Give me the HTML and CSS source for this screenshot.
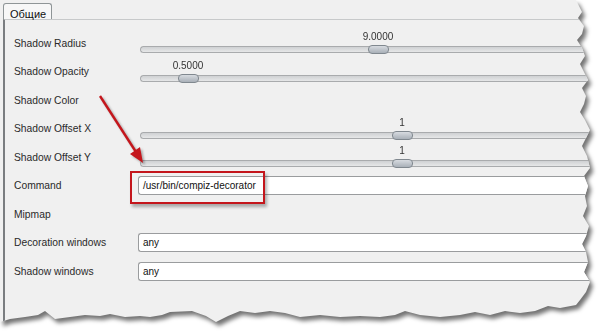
FILE: index.html
```html
<!DOCTYPE html>
<html lang="ru">
<head>
    <meta charset="UTF-8">
    <title>Compiz decorator</title>
    <link rel="stylesheet" href="styles.css">
</head>
<body>
    <div class="sheet">
        <div class="panel">
            <div class="tabs">
                <div class="tab">Общие</div>
            </div>
            <div class="page">
                <div class="row">
                    <span class="label">Shadow Radius</span>
                    <div class="slider">
                        <span class="value" style="left: 243px">9.0000</span>
                        <span class="thumb" style="left: 233px"></span>
                    </div>
                </div>
                <div class="row">
                    <span class="label">Shadow Opacity</span>
                    <div class="slider">
                        <span class="value" style="left: 53px">0.5000</span>
                        <span class="thumb" style="left: 43px"></span>
                    </div>
                </div>
                <div class="row">
                    <span class="label">Shadow Color</span>
                </div>
                <div class="row">
                    <span class="label">Shadow Offset X</span>
                    <div class="slider">
                        <span class="value" style="left: 267px">1</span>
                        <span class="thumb" style="left: 257px"></span>
                    </div>
                </div>
                <div class="row">
                    <span class="label">Shadow Offset Y</span>
                    <div class="slider">
                        <span class="value" style="left: 267px">1</span>
                        <span class="thumb" style="left: 257px"></span>
                    </div>
                </div>
                <div class="row">
                    <span class="label">Command</span>
                    <div class="entry">/usr/bin/compiz-decorator</div>
                </div>
                <div class="row">
                    <span class="label">Mipmap</span>
                </div>
                <div class="row">
                    <span class="label">Decoration windows</span>
                    <div class="entry">any</div>
                </div>
                <div class="row">
                    <span class="label">Shadow windows</span>
                    <div class="entry">any</div>
                </div>
            </div>
        </div>
    </div>

    <!-- пометки поверх скриншота -->
    <div class="mark-box"></div>
    <svg class="mark-arrow" width="60" height="80" viewBox="0 0 60 80">
        <line x1="5" y1="5" x2="41" y2="61" stroke="#c4161c" stroke-width="2.4"/>
        <polygon points="48,72 35,63 45,56" fill="#c4161c"/>
    </svg>
</body>
</html>
```

FILE: styles.css
```css
body {
    margin: 0;
    background-color: #fff;
    font-family: "Liberation Sans", Arial, sans-serif;
    font-size: 10px;
    color: #222;
    width: 600px;
    height: 332px;
    overflow: hidden;
    position: relative;
}

/* рваный край со скриншота */
.sheet {
    filter: drop-shadow(3px 4px 2px rgba(0, 0, 0, 0.55));
}

.panel {
    width: 600px;
    height: 332px;
    background-color: #f0f0f0;
    clip-path: polygon(0 0, 576px 0, 580px 8px, 582px 12px, 578px 18px, 584px 26px, 582px 34px, 577px 40px,
        582px 48px, 585px 56px, 580px 64px, 584px 72px, 588px 80px, 582px 88px, 586px 96px, 584px 104px,
        580px 112px, 585px 120px, 590px 130px, 586px 138px, 582px 146px, 587px 156px, 590px 168px,
        584px 176px, 588px 186px, 585px 196px, 587px 206px, 583px 216px, 589px 226px, 586px 236px,
        582px 244px, 586px 252px, 588px 262px, 584px 272px, 590px 282px, 586px 292px, 580px 300px,
        576px 305px, 560px 308px, 548px 306px, 535px 311px, 520px 313px, 505px 311px, 490px 315px,
        475px 312px, 460px 315px, 440px 317px, 420px 315px, 405px 311px, 395px 315px, 380px 317px,
        360px 316px, 340px 317px, 320px 315px, 300px 317px, 285px 313px, 270px 311px, 255px 313px,
        240px 311px, 228px 316px, 216px 322px, 206px 316px, 192px 311px, 170px 312px, 162px 315px,
        150px 317px, 140px 316px, 125px 317px, 110px 314px, 100px 316px, 85px 315px, 70px 317px,
        55px 319px, 45px 311px, 38px 315px, 25px 317px, 10px 319px, 0 322px);
}

.tabs {
    display: flex;
    padding: 3px 0 0 3px;
    height: 19px;
    box-sizing: border-box;
}

.tab {
    padding: 4px 5px 0 6px;
    border: 1px solid #8f9597;
    border-bottom: none;
    border-radius: 3px 3px 0 0;
    background-color: #f7f7f7;
    font-size: 11px;
    color: #111;
}

.page {
    border-top: 1px solid #c7c9ca;
    border-left: 2px solid #7a7d80;
    margin-left: 3px;
    height: 310px;
    padding-top: 9px;
    box-sizing: border-box;
}

.row {
    display: grid;
    grid-template-columns: 130px 1fr;
    align-items: center;
    height: 28.5px;
}

.label {
    padding-left: 9px;
    font-size: 10.3px;
    color: #2a2a2a;
}

/* ползунок */
.slider {
    position: relative;
    height: 28px;
}

.slider::before {
    content: "";
    position: absolute;
    left: 5px;
    right: 0;
    top: 17px;
    height: 5px;
    border: 1px solid #a9abad;
    border-right: none;
    border-radius: 4px 0 0 4px;
    background: linear-gradient(#cfd1d3, #e6e7e8);
}

.slider .value {
    position: absolute;
    top: 2px;
    transform: translateX(-50%);
    font-size: 10px;
    color: #333;
}

.slider .thumb {
    position: absolute;
    top: 16px;
    width: 19px;
    height: 7px;
    border: 1px solid #80888f;
    border-radius: 4px;
    background: linear-gradient(#d7dbe0, #a9b0b8);
}

/* поле ввода */
.entry {
    height: 19px;
    box-sizing: border-box;
    margin-left: 3px;
    padding: 3px 0 0 4px;
    border: 1px solid #9a9c9e;
    border-right: none;
    border-radius: 3px 0 0 3px;
    background-color: #fff;
    color: #111;
}

.mark-box {
    position: absolute;
    left: 130px;
    top: 171px;
    width: 131px;
    height: 29px;
    border: 2px solid #c4161c;
    box-shadow: 2px 3px 3px rgba(0, 0, 0, 0.3);
}

.mark-arrow {
    position: absolute;
    left: 95px;
    top: 91px;
    filter: drop-shadow(2px 2px 1px rgba(0, 0, 0, 0.3));
}
```
